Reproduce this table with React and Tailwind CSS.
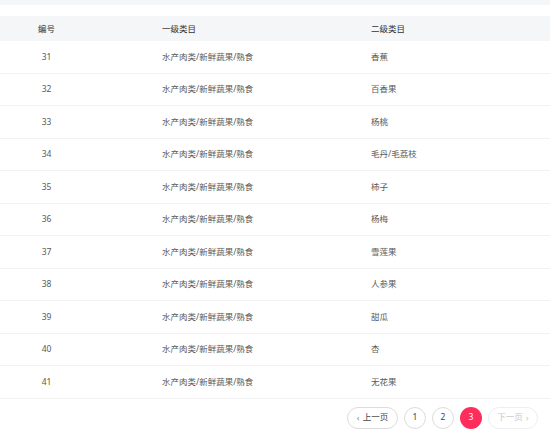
import React from "react";

const rows = [
  [31, "香蕉"],
  [32, "百香果"],
  [33, "杨桃"],
  [34, "毛丹/毛荔枝"],
  [35, "柿子"],
  [36, "杨梅"],
  [37, "雪莲果"],
  [38, "人参果"],
  [39, "甜瓜"],
  [40, "杏"],
  [41, "无花果"],
];

export default function App() {
  return (
    <div
      className="w-[550px] h-[435px] bg-white overflow-hidden text-[8.5px]"
      style={{ fontFamily: '"Noto Sans", "Noto Sans CJK SC", sans-serif' }}
    >
      <div className="h-[5px] bg-[#f5f6f8]" />
      <div className="h-[11px] bg-white" />
      <div className="h-[25px] pt-[1px] bg-[#f5f6f8] grid grid-cols-[93px_278px_1fr] items-center text-[#333]">
        <div className="text-center">编号</div>
        <div className="pl-[69px]">一级类目</div>
        <div>二级类目</div>
      </div>
      {rows.map(([id, name]) => (
        <div
          key={id}
          className="h-[32.5px] pt-[1px] border-b border-[#f2f2f2] grid grid-cols-[93px_278px_1fr] items-center text-[#5a5a5a]"
        >
          <div className="text-center">{id}</div>
          <div className="pl-[69px]">水产肉类/新鲜蔬果/熟食</div>
          <div>{name}</div>
        </div>
      ))}
      <div className="flex justify-end items-center gap-[6px] pt-[8px] pr-[12px]">
        <div className="h-[22px] w-[51px] rounded-full border border-[#dcdcdc] flex items-center justify-center gap-[3px] text-[#444]">
          <span className="text-[9px] text-[#888] leading-none">‹</span>
          <span>上一页</span>
        </div>
        <div className="h-[22px] w-[22px] rounded-full border border-[#dcdcdc] flex items-center justify-center text-[#444]">1</div>
        <div className="h-[22px] w-[22px] rounded-full border border-[#dcdcdc] flex items-center justify-center text-[#444]">2</div>
        <div className="h-[22px] w-[22px] rounded-full bg-[#fd2d5c] flex items-center justify-center text-white">3</div>
        <div className="h-[22px] w-[50px] rounded-full border border-[#eeeeee] flex items-center justify-center gap-[3px] text-[#c8c8c8]">
          <span>下一页</span>
          <span className="text-[9px] leading-none">›</span>
        </div>
      </div>
    </div>
  );
}
